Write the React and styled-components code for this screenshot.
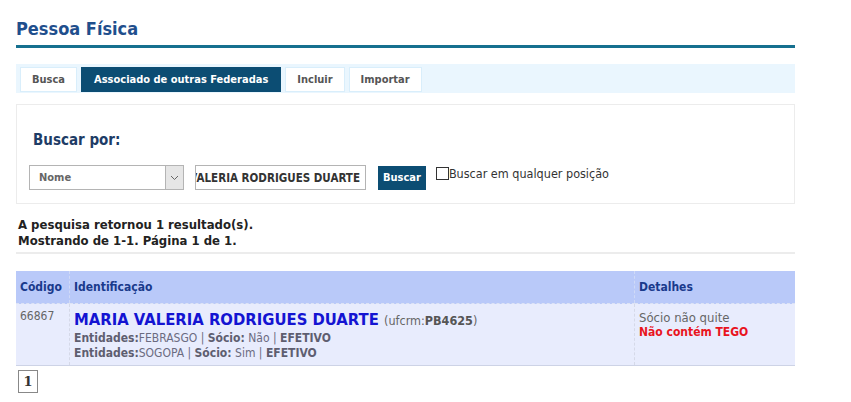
import styled, { createGlobalStyle } from "styled-components";

const GlobalStyle = createGlobalStyle`
  body {
    margin: 0;
    background: #fff;
    font-family: "DejaVu Sans Condensed", "DejaVu Sans", Verdana, sans-serif;
  }
`;

const tabs = ["Busca", "Associado de outras Federadas", "Incluir", "Importar"];

const App = () => {
  return (
    <Page>
      <GlobalStyle />
      <Title>Pessoa Física</Title>
      <TabBar>
        {tabs.map((t, i) => (
          <Tab key={t} active={i === 1}>
            {t}
          </Tab>
        ))}
      </TabBar>
      <SearchPanel>
        <PanelLabel>Buscar por:</PanelLabel>
        <SearchRow>
          <Select>
            <span>Nome</span>
            <Arrow>
              <svg width="9" height="6" viewBox="0 0 9 6">
                <path d="M1 1 L4.5 4.5 L8 1" fill="none" stroke="#666" strokeWidth="1" />
              </svg>
            </Arrow>
          </Select>
          <TextInput>
            <span>VALERIA RODRIGUES DUARTE</span>
          </TextInput>
          <SearchButton>Buscar</SearchButton>
          <CheckLabel>
            <Box />
            Buscar em qualquer posição
          </CheckLabel>
        </SearchRow>
      </SearchPanel>
      <Summary>
        <div>A pesquisa retornou 1 resultado(s).</div>
        <div>Mostrando de 1-1. Página 1 de 1.</div>
      </Summary>
      <Table>
        <thead>
          <tr>
            <Th width="45px">Código</Th>
            <Th>Identificação</Th>
            <Th width="152px">Detalhes</Th>
          </tr>
        </thead>
        <tbody>
          <tr>
            <Td className="code">66867</Td>
            <Td>
              <Name>
                MARIA VALERIA RODRIGUES DUARTE{" "}
                <small>
                  (ufcrm:<b>PB4625</b>)
                </small>
              </Name>
              <Info>
                <b>Entidades:</b>FEBRASGO | <b>Sócio:</b> Não | <b>EFETIVO</b>
              </Info>
              <Info>
                <b>Entidades:</b>SOGOPA | <b>Sócio:</b> Sim | <b>EFETIVO</b>
              </Info>
            </Td>
            <Td>
              <Status>Sócio não quite</Status>
              <Alert>Não contém TEGO</Alert>
            </Td>
          </tr>
        </tbody>
      </Table>
      <Pager>1</Pager>
    </Page>
  );
};

export default App;

const Page = styled.div`
  width: 779px;
  padding: 18px 0 0 16px;
`;

const Title = styled.h1`
  margin: 0;
  font-size: 18px;
  font-weight: bold;
  color: #1f4f8d;
  line-height: 22px;
  padding-bottom: 5px;
  border-bottom: 3px solid #16708f;
`;

const TabBar = styled.div`
  display: flex;
  gap: 4px;
  margin-top: 16px;
  height: 29px;
  padding: 3px 4px 1px;
  box-sizing: border-box;
  background: #eaf6fe;
`;

const Tab = styled.div`
  display: flex;
  align-items: center;
  padding: 0 ${(p) => (p.active ? "12px" : "11px")};
  font-size: 11px;
  font-weight: bold;
  color: ${(p) => (p.active ? "#fff" : "#555")};
  background: ${(p) => (p.active ? "#0c4d73" : "#fff")};
  border: 1px solid ${(p) => (p.active ? "#0c4d73" : "#d9eefb")};
`;

const SearchPanel = styled.div`
  margin-top: 11px;
  height: 100px;
  box-sizing: border-box;
  border: 1px solid #ececec;
  padding: 26px 12px 0 12px;
`;

const PanelLabel = styled.div`
  font-size: 15px;
  font-weight: bold;
  color: #1e3c66;
  padding-left: 4px;
  line-height: 18px;
`;

const SearchRow = styled.div`
  display: flex;
  align-items: center;
  margin-top: 16px;
`;

const Select = styled.div`
  display: flex;
  align-items: center;
  justify-content: space-between;
  width: 155px;
  height: 25px;
  box-sizing: border-box;
  border: 1px solid #b4b4b4;
  padding-left: 9px;
  font-size: 11px;
  font-weight: bold;
  color: #666;
`;

const Arrow = styled.div`
  display: flex;
  align-items: center;
  justify-content: center;
  width: 17px;
  height: 23px;
  background: #e6e6e6;
  border-left: 1px solid #b4b4b4;
`;

const TextInput = styled.div`
  display: flex;
  justify-content: flex-end;
  align-items: center;
  overflow: hidden;
  width: 171px;
  height: 25px;
  box-sizing: border-box;
  margin-left: 11px;
  border: 1px solid #b4b4b4;
  padding-right: 5px;
  font-size: 11.5px;
  font-weight: bold;
  color: #333;
  white-space: nowrap;
`;

const SearchButton = styled.div`
  display: flex;
  align-items: center;
  margin-left: 12px;
  height: 24px;
  padding: 0 5px;
  background: #0c4d73;
  color: #fff;
  font-size: 11px;
  font-weight: bold;
`;

const CheckLabel = styled.div`
  display: flex;
  align-items: flex-start;
  align-self: flex-start;
  margin-left: 10px;
  margin-top: 1px;
  font-size: 12.5px;
  color: #333;
  line-height: 16px;
`;

const Box = styled.span`
  width: 11px;
  height: 11px;
  margin-top: 1px;
  border: 1px solid #333;
  background: #fff;
`;

const Summary = styled.div`
  margin-top: 13px;
  padding: 0 2px 3px;
  font-size: 13px;
  font-weight: bold;
  color: #222;
  line-height: 16px;
  border-bottom: 2px solid #ececec;
`;

const Table = styled.table`
  width: 100%;
  margin-top: 17px;
  border-collapse: collapse;
  font-size: 12px;
`;

const Th = styled.th`
  width: ${(p) => p.width || "auto"};
  height: 32px;
  padding: 0 4px;
  text-align: left;
  background: #b9c9f9;
  color: #1a3a8c;
  font-weight: bold;
  border-bottom: 1px dashed #dde3f5;
  border-left: 1px dashed #d0daf7;
  &:first-child {
    border-left: none;
  }
`;

const Td = styled.td`
  height: 62px;
  box-sizing: border-box;
  padding: 6px 4px 3px;
  vertical-align: top;
  background: #e8ecfd;
  border-bottom: 1px solid #cdd3e6;
  border-left: 1px dashed #d5d9e8;
  &:first-child {
    border-left: none;
  }
  &.code {
    color: #666;
    padding-top: 5px;
  }
`;

const Name = styled.div`
  font-size: 16.5px;
  font-weight: bold;
  color: #1414d2;
  line-height: 20px;
  small {
    font-size: 12.5px;
    font-weight: normal;
    color: #666;
  }
  small b {
    color: #555;
  }
`;

const Info = styled.div`
  font-size: 12px;
  color: #6b6b80;
  line-height: 15px;
  b {
    color: #5e5e70;
  }
`;

const Status = styled.div`
  font-size: 13px;
  color: #666;
  line-height: 15px;
`;

const Alert = styled.div`
  font-size: 12px;
  font-weight: bold;
  color: #e8141e;
  line-height: 15px;
`;

const Pager = styled.div`
  display: flex;
  align-items: center;
  justify-content: center;
  width: 18px;
  height: 21px;
  margin: 4px 0 0 2px;
  border: 1px solid #888;
  font-family: "DejaVu Serif", "Liberation Serif", serif;
  font-weight: bold;
  font-size: 13px;
  color: #333;
`;
